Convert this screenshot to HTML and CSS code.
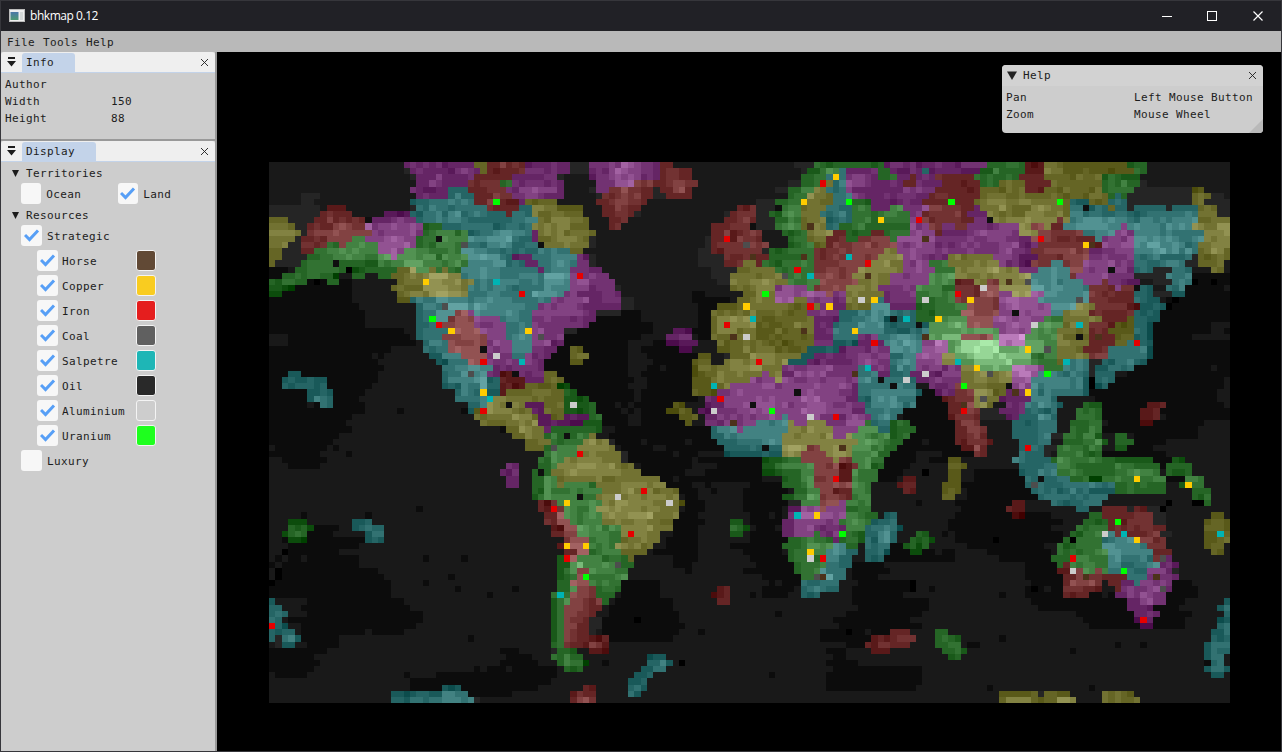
FILE: index.html
```html
<!DOCTYPE html>
<html lang="en">
<head>
<meta charset="utf-8">
<title>bhkmap 0.12</title>
<link rel="stylesheet" href="styles.css">
</head>
<body>
<div class="window">
  <header class="titlebar">
    <svg class="app-icon" width="16" height="14" viewBox="0 0 16 14"><rect x=".5" y=".5" width="15" height="12" fill="#eee" stroke="#bbb"/><defs><linearGradient id="g" x2="0" y2="1"><stop stop-color="#4c78a8"/><stop offset="1" stop-color="#4f9a72"/></linearGradient></defs><rect x="1.5" y="3" width="8" height="8" fill="url(#g)"/><path d="M11 3h3v8h-3z" fill="#d4d8d8"/></svg>
    <span class="app-title">bhkmap 0.12</span>
    <svg class="controls" width="106" height="12" viewBox="0 0 106 12" fill="none" stroke="#fff"><path d="M0 6.5h10M45.500 1.500h9v9h-9z" shape-rendering="crispEdges"/><path d="M91.500 1.500l9 9M100.500 1.500l-9 9" stroke-width="1.200"/></svg>
  </header>
  <nav class="menu"><span>File</span><span>Tools</span><span>Help</span></nav>
  <main class="workspace">
    <aside class="sidebar">
      <section class="panel info">
        <div class="tabs"><svg class="dock" width="9" height="10" viewBox="0 0 9 10"><path d="M1 0h7v2H1zM0 4h9L4.500 9.500z"/></svg><span class="tab tab-info">Info</span><svg class="x" width="9" height="9" viewBox="0 0 9 9"><path d="M1 1l7 7M8 1l-7 7"/></svg></div>
        <dl class="facts"><dt>Author</dt><dd></dd><dt>Width</dt><dd>150</dd><dt>Height</dt><dd>88</dd></dl>
      </section>
      <section class="panel display">
        <div class="tabs"><svg class="dock" width="9" height="10" viewBox="0 0 9 10"><path d="M1 0h7v2H1zM0 4h9L4.500 9.500z"/></svg><span class="tab tab-display">Display</span><svg class="x" width="9" height="9" viewBox="0 0 9 9"><path d="M1 1l7 7M8 1l-7 7"/></svg></div>
        <div class="tree" id="tree"></div>
      </section>
    </aside>
    <div class="viewport">
      <canvas class="map" id="map" width="961" height="541"></canvas>
      <section class="help">
        <div class="help-title"><svg width="10" height="9" viewBox="0 0 10 9"><path d="M0 .5h10L5 9z" fill="#222"/></svg><span>Help</span><svg class="x" width="9" height="9" viewBox="0 0 9 9"><path d="M1 1l7 7M8 1l-7 7"/></svg></div>
        <dl class="keys"><dt>Pan</dt><dd>Left Mouse Button</dd><dt>Zoom</dt><dd>Mouse Wheel</dd></dl>
        <i class="grip"></i>
      </section>
    </div>
  </main>
</div>
<script src="map.js"></script>
</body>
</html>
```
FILE: styles.css
```css
* { box-sizing: border-box; }
body { margin: 0; background: #000; font: 11px/17px "DejaVu Sans Mono", monospace; letter-spacing: .378px; color: #1c1c1c; }
.window { width: 1282px; height: 752px; border: 1px solid #36363b; display: flex; flex-direction: column; }
.titlebar { height: 30px; background: #212126; display: flex; align-items: center; padding: 0 18px 0 8px; color: #fff; }
.app-icon { display: block; }
.app-title { font: 12px/16px "Open Sans", sans-serif; letter-spacing: -.45px; margin-left: 5px; }
.controls { margin-left: auto; transform: translateX(5px); }
.menu { height: 21px; background: #b9b9b9; display: flex; gap: 8px; padding: 3px 6px 1px; }
.workspace { flex: 1; display: flex; min-height: 0; }
.sidebar { width: 216px; background: #999; border-right: 2px solid #999; display: flex; flex-direction: column; gap: 2px; }
.panel { background: #cdcdcd; }
.info { height: 87px; }
.display { flex: 1; }
.tabs { height: 21px; background: #efefef; border-bottom: 1px solid #c3d3e9; border-radius: 3px 3px 0 0; display: flex; align-items: center; padding: 0 6px; }
.dock { fill: #1c1c1c; margin-right: 6px; }
.tab { background: #c3d3e9; height: 19px; border-radius: 3px 3px 0 0; padding-left: 4px; margin-top: 1px; line-height: 20px; }
.tab-info { width: 53px; }
.tab-display { width: 74px; }
.x { margin-left: auto; fill: none; stroke: #1c1c1c; stroke-width: .9; }
.facts, .keys { display: grid; margin: 0; padding: 3px 4px; grid-auto-rows: 17px; }
.facts { grid-template-columns: 106px 1fr; }
.keys { grid-template-columns: 128px 1fr; }
dd { margin: 0; }
.tree { padding-top: 3px; }
.branch { height: 17px; display: flex; align-items: center; gap: 7px; padding-left: 11px; margin-bottom: 1px; }
.branch svg { display: block; }
.row { height: 21px; display: flex; align-items: center; margin-bottom: 4px; padding-left: 20px; }
.row-pair { margin-bottom: 3px; }
.row-pair .label { width: 74px; }
.leaf { padding-left: 36px; }
.box { width: 21px; height: 21px; border-radius: 3px; background: #f7f7f7; margin-right: 4px; display: flex; align-items: center; justify-content: center; }
.row-pair .box, .row-top .box { margin-right: 5px; }
.box svg { fill: none; stroke: #579ff6; stroke-width: 3; transform: translateY(-1px); }
.label { width: 74px; white-space: nowrap; padding-top: 1px; }
.swatch { width: 20px; height: 21px; border: 1px solid #f4f4f4; border-radius: 3px; }
.viewport { flex: 1; background: #000; position: relative; padding: 110px 0 0 52px; }
.map { display: block; }
.help { position: absolute; top: 13px; right: 18px; width: 261px; height: 68px; background: #cdcdcd; border-radius: 4px; overflow: hidden; }
.help-title { height: 21px; background: #d2d2d2; display: flex; align-items: center; padding: 0 6px 0 5px; gap: 6px; line-height: 21px; }
.grip { position: absolute; right: 0; bottom: 0; border: 7px solid transparent; border-right-color: #b9b9b9; border-bottom-color: #b9b9b9; }
```
FILE: map.js
```js
// Display tree
const CHECK = '<svg width="16" height="14" viewBox="0 0 16 14"><path d="M1 7l4.500 4.500L14 2.500"/></svg>';
const box = (label, on) => `<span class="box">${on ? CHECK : ''}</span><span class="label">${label}</span>`;
const branch = t => `<div class="branch"><svg width="7" height="7" viewBox="0 0 7 7"><path d="M0 0h7L3.500 7z" fill="#1c1c1c"/></svg>${t}</div>`;
const kinds = [['Horse', '#614935'], ['Copper', '#f9cc20'], ['Iron', '#e51e1e'], ['Coal', '#606060'], ['Salpetre', '#1eb6b6'], ['Oil', '#292929'], ['Aluminium', '#cdcdcd'], ['Uranium', '#1eff1e']];
document.getElementById('tree').innerHTML =
  branch('Territories') + `<div class="row row-pair">${box('Ocean', false)}${box('Land', true)}</div>` +
  branch('Resources') + `<div class="row row-top">${box('Strategic', true)}</div>` +
  kinds.map(([n, c]) => `<div class="row leaf">${box(n, true)}<span class="swatch" style="background:${c}"></span></div>`).join('') +
  `<div class="row row-top">${box('Luxury', false)}</div>`;

// Territory rows: start column, hue (m r g y t, k = sea), elevation
const rows = `21m3 22m4 24m3 26m4 27m3 32y3 34r3 36r4 39r3 40m3 44m4 45m3 47k3 50m4 53m5 55m6 57m5 58m4 60m3 61r3 63k 82k3 85g3 96m2 97m4 99m3 100m4 101m2 102m3 104m4 105m3 107m2 108m4 112g3 115g4 117g3 118r2 121y4 123y3 124y2 134g2 135g3 137k
21k3 22m3 23m4 24m3 29m4 30m5 31m4 33y3 34r3 36r4 38r3 40m4 43m3 44m4 45m3 47k3 50m3 51m4 53m5 54m6 57m5 58m4 60m3 61r3 62r4 64r3 66k 83k3 84g3 86g4 87g5 89t4 90m3 95g3 97m2 100m3 102t3 103m3 108m2 111g3 113g5 114g3 118r2 121y4 124y2 135g3 137k
22k3 23m3 26m5 27m3 32r3 38m3 45k3 46k 50m2 51m4 53m5 55m6 57m5 58m4 60m3 61r3 62r4 64r3 66k 83g3 85g4 87t4 90m4 91m5 93m4 94m3 95g3 98m3 100r3 101m3 102m4 104r3 110g3 112g4 113g3 117r3 121y3 125y2 126y3 130g3 136k
23m3 25m5 26m3 31r3 33r4 36g3 38m3 40m4 43m3 46k 51m4 54m6 56m7 57r5 58r4 60r3 61r3 62r4 63r5 65r4 67k 81k3 83g3 85g4 87y4 88t3 89t5 90m6 91m5 93m4 94m3 99r3 100r3 101m3 105r3 111g3 112g4 113g3 114y3 118r3 122y3 130g3 131g4 134g3 136k3 137k
22m4 23m3 28t3 31r3 34r4 37m4 39m5 41m6 42m5 43m4 45m3 46k 50k3 51m4 53r4 55r6 56r4 59r3 60k3 61r3 63r5 65r3 66k 79k3 81g3 83g4 85y4 87t3 89t4 90m5 91m3 99m4 104r3 111y3 118r3 121y3 130g3 131g4 135k3 144y2 146k
5k3 8k 23m3 28t3 29t5 30t3 32r3 35r5 36r4 38m4 41m5 42m4 43m3 46k 51k3 52r3 54r5 56r4 58r3 60k3 62r3 66k 81g3 82g4 84y6 85y4 87y3 88t4 91m5 92m4 93m3 96m4 97m3 103r3 111y3 112y4 114y3 117y4 118y3 131g3 132t3 133g3 134k3 144y3 145y4 146y3 147k3 149k
5k3 7k 22t3 24t4 28t5 29t4 30t5 31t4 32r3 34r5 36r3 39m3 40y3 45k 51r3 53r4 54r5 55r4 58r3 59k 76k3 79g3 81g4 84y4 87y3 88t4 91g3 94m3 102r3 106r4 107r3 110y3 111y4 112y5 114y4 117y5 119y4 124y3 125t3 128y3 131t3 132t4 133t3 134k3 144y3 145y4 146k3
0k3 8k 9r2 12k 22k3 23t3 25t5 26t4 28t3 29t4 34r3 39t3 41y4 45y2 49k 52r3 54r5 55r4 56r3 58k 73r3 76k3 80g4 81g5 83y4 87t3 91g4 94m3 97g5 99m4 102m6 103r5 105r4 108r3 110m3 111y4 113y5 115y4 116y3 119y5 122y4 124y3 125t4 128t3 131y3 132t3 134k3 135t3 140k3 141t3 145y3 148k3
0k3 8r3 9r4 10r3 13k 18m2 22t3 24t4 28t5 30t4 34t3 37r3 38t4 40t3 41y4 44y4 46y3 49k 52r3 54r4 56r3 57k3 58k 71k3 72r3 73r4 76k3 78g3 80g5 81g6 82g5 83y4 86t3 88t4 90t3 91g4 97g5 98g4 100m4 101m5 102r4 108r3 109m3 112y4 116y3 118y5 122y4 124y3 125t5 127t4 130t3 132t4 134t3 137t4 145y4 147y4 148k3
0y3 3k3 7r3 9r5 10r4 13r3 15k0 16m3 19m4 22m4 23t3 24t4 27t5 29t4 31t3 36t3 38t4 42y3 44y5 47y4 49y3 50k 53r3 55r4 56k 71r3 73r4 74r5 75r3 76k3 79g3 81g5 82g4 83y3 84y4 87t3 91g4 94g3 95g4 100m5 102r5 103r4 108r3 110m3 113y5 118y6 119y5 123r4 124y5 125t5 127t6 130t5 134t4 136t5 145y3 147y4
0y4 2y4 4k3 6r3 7r4 10r5 13r4 15m7 16m4 18m5 24g3 27t3 31t4 33t3 36t4 41y5 42y4 45y5 47y3 50k 53r3 55k 69r3 72r4 75k0 76k3 79g4 80g5 83y3 84y4 87t3 89g3 91g4 93g3 100m5 102m5 103r4 105m4 107r4 109m4 114m5 117y5 119r5 121y5 122r3 124t5 126t6 130t5 133m5 134t5 139t4 140t5 144y6 145y5 146y4 148y5
0y5 3y4 5k3 6r4 7r5 10r6 12r5 16m4 18m5 24g4 26g5 29g3 30g5 31t3 34t4 36t6 39t5 40t4 41m3 42y4 45y5 46y4 50y3 51k 69r3 71r5 72r3 75r4 77k 80g3 84y4 85y5 88r3 90g3 94r3 96g4 100m5 101m6 102m5 104r3 105m3 109m4 111m5 117y6 120r5 122r4 127t4 129t5 132m5 135t5 139t4 146y5 149y6
0y4 4k3 5r3 7r4 9r5 13g5 15m5 18m6 20m5 23g3 24g4 27g5 31t5 34t6 36t6 38t4 39t3 41m3 42y3 45y5 47y4 50k3 51k 68k3 69r3 73r4 76r3 77k 81g3 82g4 84y4 87r3 90g3 92r4 94r5 97g4 98m5 100m6 102m5 104m4 112m5 114m4 117m3 119r5 121r4 123r3 129t5 130m5 134m6 135t6 137t5 142t4 145t6 146y5 148y5
0y4 3k3 5r3 8r4 9g4 11r5 12g5 14g6 15g5 17m6 21m7 22m5 23g3 24g4 26g5 30t6 31t4 34t5 38t3 40t4 43y4 46y5 47y4 50k3 51k 68k3 69r3 71r4 75r4 78k 81g3 83g4 85y3 87r4 90r5 98m5 101m6 102m5 104m4 114m5 117m3 119m4 120r4 127r3 130m5 133m6 135t6 139t5 143t4 145y4 147y5
0y3 2k3 5r3 7g4 9g5 11g6 12g5 13g6 14g5 17m6 19m7 20m5 21g6 23g5 25g4 30t6 32t5 34t4 36t3 40t3 42t4 47y3 49k 67k3 69r3 71r4 75r4 77k3 78g3 81g4 85r3 87r4 91r5 96y5 98m5 100m6 101m5 104m4 106m4 113m5 116m4 118m3 119r4 121r5 126r4 128m4 133m5 135t5 138t6 141t5 144t4 145y3 147y5 149y3
0y3 2k3 6g3 8g4 11g5 15g4 17g7 19m7 20g6 23g5 26g3 27g5 31t6 34t6 36t4 38m3 41t4 44t5 45t5 48m3 50k3 51k 67k3 71r3 74r4 76r3 78g3 82g4 84g4 85r4 88r5 95y5 99m5 100m6 101m5 102m4 106y4 110y4 113m5 117m2 120r4 124r5 128m4 134m5 135t4 139t3 143t4 144k3 145y3
0y3 1k3 5g3 7g4 11g3 15g2 17g4 19g5 21g7 24g5 27g4 29g5 31t5 35t6 37t3 40m3 42t4 44t5 48m4 50k3 51k 67k3 71r3 74y3 76r3 77g3 80g4 85r4 89r5 94y5 98y4 99m5 101m6 102m5 103g4 106y4 110y5 114m4 117m2 119r4 122t5 124r5 127m5 132m4 135t3 139t4 143k3 145y3 149k
0k 4g3 6g4 11g3 13g2 15g3 18g3 20y3 22y7 23g6 25y4 26g4 27y4 28g4 30t5 36t4 38t3 40t4 42m3 43t4 44t5 47m4 50m3 52k 69k3 73y3 75y4 79g4 82g4 85r4 87r5 92y5 99m5 101m6 102m5 104g4 107y5 112y6 114y5 117m4 120t5 122t6 123t5 125r6 127m5 131m5 134m3 135t3 138k3 141t4 143t3 144k 147y3 149k
2g3 5g4 8g3 10g0 11k 13g3 15k 17g3 19y3 21y4 23y5 25y7 28y5 30t4 32t5 36t4 39t5 42t4 43t6 47m5 51m4 53k 69k3 72y4 79y5 81g4 85r5 91y5 93y4 97m5 103g6 107y5 109y4 113y5 117y6 119t5 122t6 123t5 125r4 126m5 131m4 135k3 140t4 144k
0g3 2g4 4g3 6k 9g3 11k 19k2 20y3 22y4 25y6 28y5 32t5 34t3 36t5 40t4 43t6 47m5 48m6 50m4 54k 70k3 72y4 75y5 79y4 81g5 86r6 87r5 92y4 97m5 102m5 103g5 107r3 110y5 112r5 114y5 118k4 119t6 120t5 122t6 123t5 127m5 130r4 131m4 134m2 136k 138k3 141t4 144k
0g2 2g0 4k 19y3 22y3 24y5 26y6 28y5 31t4 35t5 37t4 42t5 46t5 47m5 50m3 52m4 54k3 55k 72y4 75y5 79m4 80m6 82m5 84g5 85r5 88r6 89r5 90y5 95m4 101g5 105g3 107r4 110r3 112r6 114y6 119t7 121t5 122t6 124t5 128r4 132m5 133r4 135k0 136t3 138k 140t4 143k
0g1 2k 20y3 22y5 24y4 25y6 29y5 31t4 34t5 36t4 39t4 41t6 46m5 48m3 53m3 55k 74y3 76y4 79m6 81m5 83m6 87r6 88m5 90y4 96m3 97m4 101g4 103g5 105g4 107r4 111r6 114m5 116y7 119m6 121t6 123t5 128r4 132r3 135t3 137t2 138k3 141t2 143k
20y2 22t3 23t4 26t6 29t5 33t6 36t5 38t4 42t4 44m5 48m5 50m3 52m4 55k3 57k 73y3 76y4 79m7 82y4 84m4 86m5 88m3 90y4 95t4 96m3 97m4 101g4 106g5 107r5 113r4 114m6 120t6 122t5 128r4 131r3 135t3 137t2 139k
23t3 24t5 27t7 31t6 34t5 36t5 39t4 42m4 44m5 48m3 53m3 55k3 57k 70y2 73y3 74y4 81y3 84y4 86m3 90y3 94t6 97m3 101g3 104g4 108g5 109r5 113r4 114m6 122t6 126y5 129r4 134r2 136t2 140k
23t3 24t4 26t6 29r6 31m5 32t5 36t5 39t4 41m4 43m5 47m4 50m3 51k3 55k 69y3 71y4 75y5 76y3 84m4 86m4 89t3 92t4 94t6 95t5 97t4 100t3 101g3 104g4 108r6 110r5 114m5 118m6 122t5 124y5 128r4 131r3 135t3 137t2 139k
23t3 24t5 26t6 28r4 29r6 31r5 32m6 33m5 36t5 39t4 41m4 43m4 47m3 51k 69y3 70y5 76y3 77y2 79y3 83y4 85m3 89t3 91t4 93t5 96t2 100t3 101g3 104g5 106g6 108g6 109r6 113m6 119m5 121g5 124y4 130r3 134y2 135t3 137t2 139k
23t3 24t4 27r5 29r6 32m5 36m5 37t4 38t5 41m5 44m4 46m4 48m3 50k 69y3 70y5 76y2 79y3 82y5 83y4 85m3 88t4 92t5 95t6 96t2 98t3 103g6 105g7 109r6 113m5 115m6 119g6 124y4 128r4 131r2 132y2 135t2 137t1 138k
23t3 24t4 28r5 29r6 31r6 33m5 36m5 37t5 41m5 43m4 46k3 48k 63m2 66k 69y3 70y5 73y4 76y2 79y3 84y4 85m3 88t4 91t5 96t2 100t4 102t5 103g6 108g7 112g6 114m6 119g6 122g5 123y4 128r3 131y2 135t3 137t1 138k
23t3 24t4 27r5 30r6 33r5 34m5 37t5 39t6 40t5 41m5 43m4 46k 62m3 64m4 66k 69y3 72y4 76y2 80y3 84y3 85m3 88t4 92m4 94m5 95t4 98t6 100t5 102g6 105g8 108r6 113g7 114m8 118g6 121g5 123y5 124y4 128r3 132y2 134y3 135t2 136t3 137t1 138k
24t3 25t5 28r5 32r6 34m5 38t5 41m5 44m3 46k 62m1 64m2 67k 70y3 73y4 76y3 78y2 82y3 85m4 88t2 92m3 95m3 96t5 99t6 102m5 104m7 106g7 108g9 114m8 118g7 121g5 123y5 125y4 128r3 132y3 134t3 137t2 138k
24t4 26t4 28r6 33m5 38t5 41m4 43m3 45k 47y2 49k 64m1 66k 70y2 72y3 74y4 79y3 84t2 89m2 90m4 97t6 99t5 102m6 104m7 106g7 108g9 114g8 118g7 121g5 123y4 127r3 131t4 136t5 137t1 138k
25t2 27t5 30r6 34m4 38t4 40m5 41m4 44k 47y3 50k 67y2 69k 71k3 72y3 75y5 79y4 83t2 85m3 90m4 92m5 94m4 97t3 99t5 101m6 104m6 105y6 107g7 108g8 110g9 115g8 119g4 121g5 123y4 128r4 131t4 136t4 137t1 138k
26t2 28t4 31r6 33r5 34m4 39m5 41m4 43k 47y2 49k 66y2 67y3 69k 71y4 75y5 81t2 84m3 90m3 92m5 95m4 97t4 98t5 101m5 103m6 105y5 107g6 110g8 116g7 119g4 122g4 123y3 125t4 128k3 130t3 132t4 136t2 137k
27t4 29t5 31t6 34t5 35m3 38m4 42m3 43k 66y1 67y3 70y4 72y5 77y4 80m4 84m5 88m4 92t5 94m4 97t3 98t5 101m5 105m4 108y5 111g7 116m7 120m5 121g4 124t4 126t5 128k3 129t2 131t4 133t3 135k
3t2 5k 27t3 28t4 30t6 34m4 36r2 39m4 43y3 45k 66y1 68y3 70y4 77m5 78y5 80m3 82m5 87m4 88m4 91m3 92t4 94t5 95m3 97t3 100m3 105m5 108y4 111y5 116m7 119m6 120t5 123t4 128k3 129t3 132k
2t2 3t3 7t2 9k 27t3 28t5 32t6 33t7 34t3 36r2 40m3 43y3 44y4 45y3 46k 66y2 69y4 72y4 75m5 79y6 80m5 85m4 87m5 90m4 92t5 94t4 100t3 101m3 104m4 108y4 114y5 116m6 119t5 124t5 127t2 128k0 129t3 132k
2t2 4t3 7t3 9k 27t3 30t5 33t7 34t3 36r2 40y3 42y2 44y3 45g1 47k 66y2 69y4 72m5 75m5 77m6 79m5 88m5 91m3 92t4 98t4 101k 103m3 107r5 109y4 113y3 116m6 118m5 119t5 121t5 125t4 127t2 128k0 129t2 131k
6t2 8t3 9t2 10k 29t3 30t4 33t6 34t3 36r2 37y3 41y4 44y3 46g2 48k 66y2 70m4 72m5 82m5 84m5 88m4 91m3 92t4 94t5 101t2 102k 104m3 107r4 109r5 110y5 113y3 115m3 116m4 118t4 121t4 127t2 128k
6t2 7t4 9t3 10k 29t3 31t4 33t5 35y5 37y4 41y3 43y3 46g1 49g2 50k 68m3 71m5 83m6 86m5 90m3 92t3 94t5 98t4 101k 105r2 106r3 108r5 110y4 114m2 116m3 119t5 122t3 123k
8t3 10k 31t3 33t5 34y6 35y5 37y4 40m2 43y3 46g2 50g3 51k 63y1 65k 68m3 71m5 79m5 85m6 88m4 93t3 94t5 98t4 101k 106r3 108r5 110y5 112y3 113k 115m3 118t5 122t4 123t2 124k 127g3 129g2 130k 137r2 139r3 140k
31t2 32y3 34y5 38y4 41m3 43y3 46g1 49g3 51k 62y1 64y2 66k 67m2 69m4 74m5 83m6 86m5 91m3 93t4 96t5 97t4 99k 106r3 108r5 110r4 111k3 114m3 118t3 122t4 123k 126g3 128g4 129g3 130k 136r2 138r3 139k
32y3 34y4 38y6 39y5 41y3 42m2 44y3 46m2 50g3 52k 64y2 67k 68m3 70m5 80t5 81m5 86m4 90m6 92m5 94t4 96t6 97t4 98k 106r3 108r4 111k3 115m3 117t3 120t5 122t3 123k 126g4 129g3 130k 136r2 138r3 139k
33y3 37y4 39y5 42m2 47m1 49g2 52k 65y2 66k 68m3 71m5 76t5 80t6 81y5 82m5 84y5 87m4 90m6 93g4 94t4 97g3 100k 107r3 108r5 110r4 111k 116t3 120t4 122t4 123k 125g3 128g4 130k 136r1 138k
37y3 39y5 41y4 43m3 44g3 52k 69t3 70t5 73m5 74t5 81y5 84y5 88m5 92g6 95t3 97g3 101k 107r3 109r4 112k 116t3 120t4 123k 125g3 128g4 130k
38y3 40y5 42y4 43g3 44g4 50y4 51k 69t3 71t5 80y5 88m5 90y6 91g6 94g5 97g3 100k 107r3 109r4 111r3 112k 116t3 120t4 122k3 124g4 127g5 129g2 130k 132g3 134k
40y3 42y4 44g4 49y5 51y4 53k3 54k 70t3 73t4 76t5 80y5 91y5 92g6 95g5 97g3 99k 107r3 109r4 112r2 113k 117t3 120t4 122k 124g3 126g4 129g6 130g2 131k 132g3 135k
40y3 43g3 45g5 48y5 54k 71t3 74t3 80y6 84r5 86y5 91g6 94g5 96g3 98k 108r2 110r6 111r3 112k 117t3 121k3 123g4 127g3 128g5 130k 132g2 134k
43g4 44g6 45g5 48y5 51y4 55k3 56k 71t2 80y5 83r5 86r5 87y5 91g5 95g3 97k 110r3 112k 117t3 121k3 122k 123g4 127g3 130k
42g3 44g6 45g5 46y5 52y4 55k3 56k 77g2 80g4 83r5 87r5 88y5 89r4 91g5 94g4 96k 106y2 108k 116t4 118t3 122g3 123g5 125g4 130g3 132g2 138k 141g2 143k
37m3 39k 42g3 44g5 45y5 48y6 49y5 54y4 57k 77g3 79g4 80g5 85r5 89r2 91r4 92g5 94g3 96k 106y3 109k 117t3 121t4 123g5 125g4 127g3 130g3 132g4 135g3 139k 140g3 144k
36m2 38m4 39k 41g3 42g3 44y4 46y5 54y4 58k 77g2 80g3 83g5 85r5 89r2 91g5 93g4 95k 106y2 108k 117t3 120t4 123g4 127g3 130g3 132g4 134g5 137g4 139k 140g3 144k
37m3 39k 41g3 43g5 45y4 52y3 54y4 61k 80g3 83g5 85r4 89r2 91g5 92g4 95k 99r2 101k 106y2 108k 118t3 122t4 125g3 128g1 130g4 135g4 138g5 140k 143g4 146k
37m3 39k 41g3 43g6 44g5 45y4 46g5 50g3 51y4 55y5 62k 80g3 83g5 85r5 88r6 91g5 94k 98r2 99r3 101k 105y2 108k 118t3 121t3 126t4 132g3 140k 142g2 144g4 146k
41g3 43g6 44g4 46g5 52y4 55y5 58y6 60y4 62y3 64k 82g3 84g5 86r5 88r3 91g5 93g4 94k 99r2 101k 105y2 106y3 108k 119t3 125t4 128t2 132g3 140k 144g3 147k
41g3 43g6 44g5 48g4 51y5 62y4 64k 80g2 82g4 84g6 86r5 88r4 90r3 91g5 94k 105y2 107k 120t4 125t3 128t4 131k 144g3 147k
42r2 44r4 45g5 52y5 60y4 62y4 64y1 65k 81k3 83g5 86r6 89m5 90g5 92g4 94k 116r2 118k 122t3 127t4 130k 145g3 147k
42r3 44r4 46g6 47g5 51y6 55y5 61y4 64k 81m2 83m6 86r6 87m5 90g3 92g4 94k 115r2 118k 126t3 128k 130r3 134k3 135r3 137k3 140k
43r3 45r7 46g6 47g5 52y5 56y6 60y4 64k 81m3 83m7 86m6 88m5 90g5 93g3 95k 96t2 98k 116r1 118k 128g3 130r3 134r3 136r4 138k3 140k 147y2 149k
3g1 6k 13t2 16k 43r3 45r6 47g5 49g5 52y4 56y5 60y4 62y3 63k 72g2 74k 80m3 82m5 87m5 89g5 92g4 94t3 96t4 98k 127g3 131r3 134r4 137r4 138k3 140k 146y2 147y3 149y2
3g2 5g3 6g1 7k 13t3 15t4 16t3 18k 44r2 46r6 48g7 49g5 55y5 59y6 60y4 63k 72g3 74g1 75k 80m3 82m5 86m3 88m3 90g4 93t3 95t5 97t4 98t1 99k 126g3 128g4 131r3 134r4 138r3 140k 146y3 149y2
2g1 3g3 6k 15t2 16t4 18k 44r3 46r5 48g6 50g5 52g4 55y5 59y4 61k 72g2 74k 80m3 82m5 85g4 86m3 88m5 90g3 93t3 95t5 97t3 98k 101g2 103k 125g3 128g5 131t5 132r4 134r3 137r4 139k3 141k 146y2 148y3
3g1 6k 15t2 18k 46r4 47r6 50g5 53g4 55y4 61k 81g3 84g5 86g4 88m3 89g4 92g2 93t3 95t5 97t3 98k 100g3 103g1 104k 124g3 125k0 126g4 130t4 132t5 136r4 140r3 140k 146y2 147y3 150k
45r2 47r7 49r6 50g5 52g4 54y5 56y4 60k 80g3 83g4 84g6 85g5 88t5 90g3 92k 93t3 95t4 97t1 97k 99g2 102g3 103k 123g3 126g4 130t5 137r4 140k 146y2 147y3 149k
46r3 48r6 50g4 52g5 55y3 59k 81g3 82g4 84g5 87t5 90t3 92k 93t3 95t4 96t1 97k 100g1 102k 123g3 126g4 129g5 131t6 132t5 138r4 140r3 141k 147y2 149k
45g2 47r7 48g5 52g4 55g3 56y3 57k 81g3 82g4 86g5 87t5 89t3 91k 93t3 96k 122g3 125g5 128g4 131t5 133t4 138r4 139m4 140m3 141k
45g2 47g6 48g8 49g5 54g4 55g3 57k 82g3 83g4 87t4 89t3 91k 123g3 124r3 125g4 131t5 133t4 136t5 139m3 142k
45g2 46g4 47g6 48r4 50g5 54g4 56k 82g3 83g4 86t6 87t4 90k 123r2 125r5 126r5 127g5 129r5 130g5 131t4 134t3 137m5 140m3 141k3 142k
45g2 46g4 48r6 50g4 54g5 56k 83g4 87t7 88t4 90k 124r3 126r5 127r4 130r3 134t4 137m4 141m3 142k
45g3 47r6 50g4 53g4 55k 83t3 86t4 89k 124r3 125r5 129r4 130k 131r3 133m3 135t4 136m5 138m4 141k
45g3 47g6 48r5 51g3 52g4 54g3 55k 70r2 72k 83t3 84t4 87t3 89k 124r4 127r3 130k 132r3 133m4 137m5 140m3 141k
44g3 46g4 47r5 50r4 51g3 54k 69r2 71r3 72k 83t3 86k 124r3 128k 132m3 134m4 136m6 138m4 140k
0t2 1k 44g2 45g4 46g6 47r5 49r4 52g3 53k 70r2 72k 134m3 136m5 138m4 140k 149t2
0t3 2k 44g2 45g4 46r5 49r4 50r3 52k 134m3 138k 148t2 149t4
0t3 1t4 2t3 3k 44g2 45g4 46r5 48r4 50r3 51k 135m3 137m4 139k 149t3
0t4 1t3 2k 44g2 45g4 46r5 48r4 49r3 50k3 52k 135m1 137m3 138k 148t2
0k 1t3 2t1 3k 44g2 45g4 46r5 48r3 50k3 52k 136m1 138k 148t3
0t3 1t2 2t3 4k 44g2 45g4 46r4 48r3 50k3 51k 97r3 100k 104g3 106k 147t2 149t4
0t3 1k3 2t4 4t2 5k 44g2 45g4 46r5 47r3 50r2 53k 94r2 97r3 100r4 101k 104g3 105g4 106g3 108k 147t3
1k3 2t2 4k 44g3 45g4 46r3 50r4 52r2 53k 93r2 95r4 97r3 100k 104g3 106g4 108k 146t2 147t4
44k3 45g3 48k 50r2 53k 94r2 97k 105g3 107g4 108g2 109k 146t2 147t4 149t3
44g3 46g5 47g3 49k 59t2 62k 106g3 108k 146t2 147t4 149k
45g3 46g4 49g0 50k 59t3 61t5 62t2 63k 147t3 148t4 149k
46g3 49k 58t2 60t4 62k 146t2 147t4 149t2
57t2 60k 147t2 149k
56t2 58t3 59k
27t2 30k 49r2 51k 56t3 57t4 58t2 59k
19t2 21t1 22t3 25t2 27t5 29t4 31k 47r2 48r3 51k 56t4 57t2 58k 114y2 120k3 121y3 123y2 125k 130y3 134y2 135k
19t3 22t4 27t5 29t4 32k3 33k 47r3 48r5 50r4 51k 114y3 115y5 119y3 120y2 121y3 123y5 126k 130y4 136k`.split('\n');

// Deep water: row:from-to spans
const deep = `17:0-3 18:0-2 19:6-13 20:4-13 21:2-13 22:0-13 23:0-14 24:0-15 25:0-15 26:0-15 27:0-21 28:3-22 29:3-23 30:0-19 31:0-18 32:0-17 33:0-18 34:0-17 35:0-17 36:0-16
37:0-15 38:0-14 39:0-16 40:0-15 41:0-13 42:0-12 43:0-13 44:0-11 45:0-10 46:1-9 47:0-8 48:2-9 49:3-8
21:66-68 22:66-69 23:55-57 24:54-58 25:50-58 26:49-60 27:47-60 28:46-58 22:68-72 23:67-70 24:67-69 25:67-69 26:67-69 27:66-69 28:67-69
29:46-56 30:45-56 31:44-56 32:43-56 33:43-56 34:45-56 35:46-57 36:47-56 37:48-57 38:50-57 39:51-56 40:51-55 41:52-56 42:52-56 43:53-58 44:53-58 45:54-58 46:55-60 47:56-67 48:56-66 49:58-66 50:58-65 51:61-66 52:62-66 53:64-67 54:65-67 55:65-68 56:65-68 57:64-67 58:63-67 59:63-67 60:63-67 61:62-67 62:62-67 63:60-67 64:63-67 65:63-66 66:65-66
29:60-62 30:58-64 31:60-69 32:60-66 33:59-66 34:59-66 35:59-66 36:59-66 37:58-66 38:58-67 39:57-63 40:58-62 41:58-64 42:58-65 43:58-69 44:58-69 45:59-70 46:62-71
48:67-77 49:70-77 50:68-78 51:66-77 52:75-80 53:74-82 54:74-80 55:74-81 56:74-80 57:75-80 58:75-80 59:76-79 60:75-80 61:75-81 62:72-80 63:74-80 64:75-81 65:76-82 66:74-82 67:77-83 68:78-83 69:77-82 70:77-81
37:102-104 38:101-105 39:101-106 40:99-106 41:99-106 42:100-107 43:101-107 44:100-107 45:99-107 46:98-108 47:97-101 48:96-101 49:96-100 50:95-99 51:94-98 46:103-108 47:105-110 48:103-106
61:94-97 62:97-103 63:97-107 64:96-107 65:91-96 66:91-97 67:91-95 68:92-101 69:91-101 70:91-99 71:91-103 72:92-103 73:90-102 74:88-100 75:89-102 76:86-97 77:86-94 78:89-93
55:110-117 56:108-116 57:107-122 58:106-124 59:106-122 60:107-124 61:107-124 62:109-121 63:112-122 64:114-122 65:118-123 66:118-123 67:118-124 68:119-124 69:118-124 70:118-132 71:119-134 72:120-134 73:126-135 74:127-135 75:128-136
18:144-150 19:144-150 20:143-149 21:142-150 22:140-150 23:141-150 24:139-150 25:139-150 26:138-147 27:138-150 28:138-144 29:138-150 30:138-150 31:138-150 32:137-150 33:135-150 34:134-150 35:132-149 36:131-149 37:128-148 38:129-148 39:130-149 40:130-150 41:130-150 42:130-146 43:130-145 44:135-145 45:135-140 46:134-138 47:130-140 48:138-141 49:139-140 51:140-143
50:110-117 51:110-118 52:108-118 53:109-119 54:109-120 55:107-116 56:108-115
68:141-144 69:141-145 70:140-145 71:140-143 72:138-142 73:139-144 74:138-143 75:138-143
59:3-11 60:6-10 61:2-15 62:3-14 63:3-11 64:3-14 65:2-14 66:2-17 67:2-18 68:1-19 69:0-19 70:0-19 71:6-21 72:5-22 73:6-24 74:3-23 75:5-23 76:5-21 77:5-11 78:5-11 79:0-9 80:0-7 81:0-8 82:0-7 83:1-6
79:36-39 80:37-41 81:36-42 82:34-45 83:26-45 84:22-43 85:22-42 86:31-38
68:55-61 69:55-61 70:55-61 71:54-63 72:53-63 73:53-64 74:52-64 75:51-65 76:52-64 77:53-63
79:87-90 80:88-91 81:87-92 82:87-102 83:87-102 84:87-102 85:87-101`;

const marks = {
  '#00ff00': '35,6 90,6 106,6 123,6 25,25 77,21 121,34 108,36 78,40 49,67 89,60 132,58 133,66',
  '#ffcc00': '88,2 83,6 95,9 127,13 24,19 94,22 109,22 74,23 87,23 104,25 28,27 40,27 91,27 118,30 110,33 118,37 33,37 46,55 46,62 49,62 135,51 143,52 85,57 84,63 135,61',
  '#e60000': '86,3 101,9 120,12 71,12 93,16 82,17 48,18 39,21 107,21 84,23 71,26 26,26 94,29 135,29 33,32 76,32 70,38 108,40 33,40 88,41 48,47 88,51 58,53 44,56 118,46 56,60 46,64 86,64 125,64 136,74 0,75',
  '#00b4b4': '90,15 84,18 35,19 75,25 99,25 126,26 39,32 107,32 124,32 93,33 69,36 34,38 82,57 133,60 148,60 45,70',
  '#0f0f0f': '26,12 42,13 79,7 127,7 112,9 10,16 131,17 135,20 97,25 101,26 116,24 126,28 33,30 38,34 95,35 97,36 115,36 82,37 37,39 75,39 48,54 46,44 42,50 77,46 15,9 75,10 120,51',
  '#000000': '12,17 7,19 2,63 1,66 1,67 0,68 57,74 64,81 102,50 100,68 100,69 113,61 119,69 90,76 140,55 144,55 145,55 139,56 144,19 147,19 141,22 140,23',
  '#cccccc': '92,22 102,22 111,20 119,26 74,28 35,31 99,35 102,34 69,40 47,39 84,41 54,54 62,55 84,64 130,60 125,66',
  '#4d4d4d': '74,13 30,13 80,18 118,19 27,23 126,22 42,28 121,30 31,34 112,34 111,38 44,46 119,52 85,67 54,65 139,64 139,69',
  '#4c321a': '84,10 102,12 128,13 83,15 75,15 93,18 115,19 83,27 72,28 102,28 129,28 91,34 116,37 108,39 72,42 89,46 86,67 138,67 127,67'
};

const ctx = document.getElementById('map').getContext('2d');
const X = c => Math.round(c * 961 / 150), Y = r => Math.round(r * 541 / 88);
const fill = (c0, c1, r, color) => { ctx.fillStyle = color; ctx.fillRect(X(c0), Y(r), X(c1) - X(c0), Y(r + 1) - Y(r)); };
const tints = { k: [0, 0, 0], m: [1, 0, 1], r: [1, 0, 0], g: [0, 1, 0], y: [1, 1, 0], t: [0, 1, 1] };
const steps = [0, 12, 25, 37, 50, 66, 82, 98, 122, 150, 170];
const shade = (hue, level) => `rgb(${tints[hue].map(v => steps[Math.max(0, level)] + v * 64).join()})`;
const noise = (c, r) => { const n = Math.sin(c * 127.1 + r * 311.7) * 43758.5; return n - Math.floor(n); };

for (let r = 0; r < 88; r++) fill(0, 150, r, '#191919');
for (const s of deep.split(/\s+/)) { const [r, a, b] = s.split(/[:-]/).map(Number); fill(a, b, r, '#0c0c0c'); }
for (let r = 23; r < 86; r++) for (let c = 0; c < 150; c++) if (noise(c, r) > .975) fill(c, c + 1, r, noise(r, c) > .5 ? '#0c0c0c' : '#191919');
rows.forEach((row, r) => {
  const runs = row.split(' ').map(t => t.match(/(\d+)([a-z])(\d*)/));
  runs.forEach((t, i) => {
    const a = +t[1], b = Math.min(150, i + 1 < runs.length ? +runs[i + 1][1] : 150);
    if (t[2] === 'k' && t[3] === '') return;
    for (let c = a; c < b; c++) {
      let level = +t[3];
      if (t[2] !== 'k' && b - a > 1) level += noise(c, r) > .86 ? 1 : noise(c, r) < .1 ? -1 : 0;
      fill(c, c + 1, r, shade(t[2], level));
    }
  });
});
for (const color in marks) for (const p of marks[color].split(' ')) { const [c, r] = p.split(',').map(Number); fill(c, c + 1, r, color); }
```
